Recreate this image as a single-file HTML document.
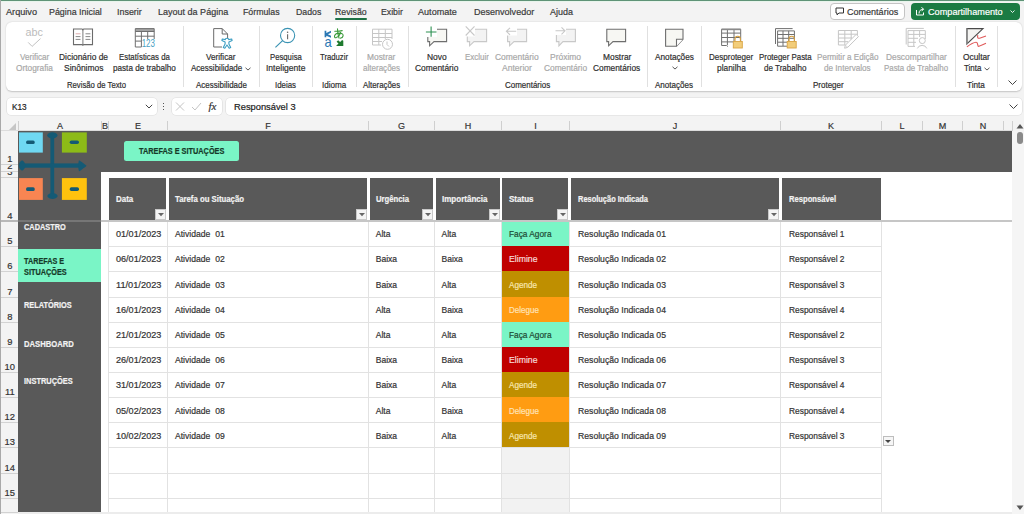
<!DOCTYPE html>
<html><head><meta charset="utf-8"><style>
html,body{margin:0;padding:0;width:1024px;height:514px;overflow:hidden;background:#f3f3f3}
body{position:relative;font-family:"Liberation Sans", sans-serif}
.t{position:absolute;white-space:nowrap;line-height:1;transform-origin:0 0;-webkit-text-stroke-width:0.2px}
.r{position:absolute}
</style></head><body>
<div class="r" style="left:0px;top:0px;width:1024px;height:514px;background:#f3f3f3;"></div><div class="r" style="left:0px;top:0px;width:1024px;height:1px;background:#5f9377;"></div><div class="r" style="left:1px;top:1px;width:1023px;height:1px;background:#e8f5ec;"></div><div class="r" style="left:0px;top:0px;width:1px;height:514px;background:#a9a9a9;"></div><div class="t" style="transform:scaleX(0.9765);left:6.15px;top:7.00px;font-size:9.4px;color:#3a3a3a;font-weight:normal">Arquivo</div><div class="t" style="transform:scaleX(0.9468);left:48.80px;top:7.00px;font-size:9.4px;color:#3a3a3a;font-weight:normal">Página Inicial</div><div class="t" style="transform:scaleX(0.9521);left:116.80px;top:7.00px;font-size:9.4px;color:#3a3a3a;font-weight:normal">Inserir</div><div class="t" style="transform:scaleX(0.9618);left:157.80px;top:7.00px;font-size:9.4px;color:#3a3a3a;font-weight:normal">Layout da Página</div><div class="t" style="transform:scaleX(0.9366);left:243.40px;top:7.00px;font-size:9.4px;color:#3a3a3a;font-weight:normal">Fórmulas</div><div class="t" style="transform:scaleX(0.9333);left:295.70px;top:7.00px;font-size:9.4px;color:#3a3a3a;font-weight:normal">Dados</div><div class="t" style="transform:scaleX(0.9358);left:335.30px;top:7.00px;font-size:9.4px;color:#3a3a3a;font-weight:normal">Revisão</div><div class="t" style="transform:scaleX(0.9295);left:380.80px;top:7.00px;font-size:9.4px;color:#3a3a3a;font-weight:normal">Exibir</div><div class="t" style="transform:scaleX(0.9691);left:418.30px;top:7.00px;font-size:9.4px;color:#3a3a3a;font-weight:normal">Automate</div><div class="t" style="transform:scaleX(0.9625);left:473.80px;top:7.00px;font-size:9.4px;color:#3a3a3a;font-weight:normal">Desenvolvedor</div><div class="t" style="transform:scaleX(0.9548);left:549.80px;top:7.00px;font-size:9.4px;color:#3a3a3a;font-weight:normal">Ajuda</div><div class="r" style="left:335px;top:18.3px;width:32px;height:1.8px;background:#1e7145;border-radius:1px"></div><div class="r" style="left:829.5px;top:3px;width:75px;height:16.5px;background:#fff;border:1px solid #c4c4c4;border-radius:4px;box-sizing:border-box"></div><svg class="r" style="left:835px;top:7px" width="10" height="9" viewBox="0 0 10 9"><path d="M1 1h7.5v5h-4.5l-2 1.8v-1.8h-1z" fill="none" stroke="#333" stroke-width="1"/></svg><div class="t" style="transform:scaleX(0.9632);left:846.90px;top:7.00px;font-size:9.4px;color:#3a3a3a;font-weight:normal">Comentários</div><div class="r" style="left:910.5px;top:3px;width:109px;height:16.5px;background:#1b7b43;border-radius:4px"></div><svg class="r" style="left:915px;top:6px" width="10" height="10" viewBox="0 0 10 10"><path d="M1.5 4v5h7V6.5" fill="none" stroke="#fff" stroke-width="1"/><path d="M4 7.5c0-3 2-4.3 4.5-4.3M6.5 1.2l2 2-2 2" fill="none" stroke="#fff" stroke-width="1"/></svg><div class="t" style="transform:scaleX(0.9751);left:927.60px;top:7.00px;font-size:9.4px;color:#ffffff;font-weight:normal">Compartilhamento</div><svg class="r" style="left:1010px;top:10px" width="5" height="3" viewBox="0 0 5 3"><path d="M0.5 0.5l2 2 2-2" fill="none" stroke="#fff" stroke-width="0.9"/></svg><div class="r" style="left:6px;top:21.5px;width:1015.5px;height:69.5px;background:#fff;border-radius:6px;box-shadow:0 0.6px 1.6px rgba(0,0,0,0.2)"></div><div class="r" style="left:183px;top:25.5px;width:1px;height:61.5px;background:#e0e0e0;"></div><div class="r" style="left:259px;top:25.5px;width:1px;height:61.5px;background:#e0e0e0;"></div><div class="r" style="left:312px;top:25.5px;width:1px;height:61.5px;background:#e0e0e0;"></div><div class="r" style="left:356px;top:25.5px;width:1px;height:61.5px;background:#e0e0e0;"></div><div class="r" style="left:408px;top:25.5px;width:1px;height:61.5px;background:#e0e0e0;"></div><div class="r" style="left:647px;top:25.5px;width:1px;height:61.5px;background:#e0e0e0;"></div><div class="r" style="left:701px;top:25.5px;width:1px;height:61.5px;background:#e0e0e0;"></div><div class="r" style="left:955px;top:25.5px;width:1px;height:61.5px;background:#e0e0e0;"></div><div class="r" style="left:997px;top:25.5px;width:1px;height:61.5px;background:#e0e0e0;"></div><div class="t" style="transform:scaleX(0.8722);left:20.10px;top:53.00px;font-size:9.3px;color:#a8a8a8;font-weight:normal">Verificar</div><div class="t" style="transform:scaleX(0.8925);left:16.30px;top:64.00px;font-size:9.3px;color:#a8a8a8;font-weight:normal">Ortografia</div><div class="t" style="transform:scaleX(0.9030);left:58.80px;top:53.00px;font-size:9.3px;color:#2e2e2e;font-weight:normal">Dicionário de</div><div class="t" style="transform:scaleX(0.9074);left:63.60px;top:64.00px;font-size:9.3px;color:#2e2e2e;font-weight:normal">Sinônimos</div><div class="t" style="transform:scaleX(0.8418);left:119.00px;top:53.00px;font-size:9.3px;color:#2e2e2e;font-weight:normal">Estatísticas da</div><div class="t" style="transform:scaleX(0.8753);left:113.00px;top:64.00px;font-size:9.3px;color:#2e2e2e;font-weight:normal">pasta de trabalho</div><div class="t" style="transform:scaleX(0.8292);left:66.50px;top:81.00px;font-size:9.3px;color:#2e2e2e;font-weight:normal">Revisão de Texto</div><div class="t" style="transform:scaleX(0.8781);left:206.20px;top:53.00px;font-size:9.3px;color:#2e2e2e;font-weight:normal">Verificar</div><div class="t" style="transform:scaleX(0.8631);left:191.20px;top:64.00px;font-size:9.3px;color:#2e2e2e;font-weight:normal">Acessibilidade</div><div class="t" style="transform:scaleX(0.8564);left:195.70px;top:81.00px;font-size:9.3px;color:#2e2e2e;font-weight:normal">Acessibilidade</div><div class="t" style="transform:scaleX(0.8314);left:269.50px;top:53.00px;font-size:9.3px;color:#2e2e2e;font-weight:normal">Pesquisa</div><div class="t" style="transform:scaleX(0.9183);left:265.60px;top:64.00px;font-size:9.3px;color:#2e2e2e;font-weight:normal">Inteligente</div><div class="t" style="transform:scaleX(0.8463);left:274.60px;top:81.00px;font-size:9.3px;color:#2e2e2e;font-weight:normal">Ideias</div><div class="t" style="transform:scaleX(0.8292);left:320.20px;top:53.00px;font-size:9.3px;color:#2e2e2e;font-weight:normal">Traduzir</div><div class="t" style="transform:scaleX(0.8708);left:321.70px;top:81.00px;font-size:9.3px;color:#2e2e2e;font-weight:normal">Idioma</div><div class="t" style="transform:scaleX(0.9011);left:367.40px;top:53.00px;font-size:9.3px;color:#a8a8a8;font-weight:normal">Mostrar</div><div class="t" style="transform:scaleX(0.8647);left:362.90px;top:64.00px;font-size:9.3px;color:#a8a8a8;font-weight:normal">alterações</div><div class="t" style="transform:scaleX(0.8444);left:362.90px;top:81.00px;font-size:9.3px;color:#2e2e2e;font-weight:normal">Alterações</div><div class="t" style="transform:scaleX(0.9071);left:427.00px;top:53.00px;font-size:9.3px;color:#2e2e2e;font-weight:normal">Novo</div><div class="t" style="transform:scaleX(0.9030);left:415.00px;top:64.00px;font-size:9.3px;color:#2e2e2e;font-weight:normal">Comentário</div><div class="t" style="transform:scaleX(0.8564);left:464.70px;top:53.00px;font-size:9.3px;color:#a8a8a8;font-weight:normal">Excluir</div><div class="t" style="transform:scaleX(0.9092);left:494.50px;top:53.00px;font-size:9.3px;color:#a8a8a8;font-weight:normal">Comentário</div><div class="t" style="transform:scaleX(0.9182);left:501.70px;top:64.00px;font-size:9.3px;color:#a8a8a8;font-weight:normal">Anterior</div><div class="t" style="transform:scaleX(0.9118);left:549.90px;top:53.00px;font-size:9.3px;color:#a8a8a8;font-weight:normal">Próximo</div><div class="t" style="transform:scaleX(0.8967);left:543.90px;top:64.00px;font-size:9.3px;color:#a8a8a8;font-weight:normal">Comentário</div><div class="t" style="transform:scaleX(0.9011);left:602.50px;top:53.00px;font-size:9.3px;color:#2e2e2e;font-weight:normal">Mostrar</div><div class="t" style="transform:scaleX(0.8953);left:592.70px;top:64.00px;font-size:9.3px;color:#2e2e2e;font-weight:normal">Comentários</div><div class="t" style="transform:scaleX(0.8574);left:505.00px;top:81.00px;font-size:9.3px;color:#2e2e2e;font-weight:normal">Comentários</div><div class="t" style="transform:scaleX(0.8853);left:654.90px;top:53.00px;font-size:9.3px;color:#2e2e2e;font-weight:normal">Anotações</div><div class="t" style="transform:scaleX(0.8649);left:655.00px;top:81.00px;font-size:9.3px;color:#2e2e2e;font-weight:normal">Anotações</div><div class="t" style="transform:scaleX(0.8638);left:708.70px;top:53.00px;font-size:9.3px;color:#2e2e2e;font-weight:normal">Desproteger</div><div class="t" style="transform:scaleX(0.8982);left:716.60px;top:64.00px;font-size:9.3px;color:#2e2e2e;font-weight:normal">planilha</div><div class="t" style="transform:scaleX(0.8498);left:758.60px;top:53.00px;font-size:9.3px;color:#2e2e2e;font-weight:normal">Proteger Pasta</div><div class="t" style="transform:scaleX(0.8654);left:764.00px;top:64.00px;font-size:9.3px;color:#2e2e2e;font-weight:normal">de Trabalho</div><div class="t" style="transform:scaleX(0.8701);left:816.50px;top:53.00px;font-size:9.3px;color:#a8a8a8;font-weight:normal">Permitir a Edição</div><div class="t" style="transform:scaleX(0.8773);left:824.00px;top:64.00px;font-size:9.3px;color:#a8a8a8;font-weight:normal">de Intervalos</div><div class="t" style="transform:scaleX(0.8606);left:812.70px;top:81.00px;font-size:9.3px;color:#2e2e2e;font-weight:normal">Proteger</div><div class="t" style="transform:scaleX(0.8997);left:885.50px;top:53.00px;font-size:9.3px;color:#a8a8a8;font-weight:normal">Descompartilhar</div><div class="t" style="transform:scaleX(0.8494);left:883.50px;top:64.00px;font-size:9.3px;color:#a8a8a8;font-weight:normal">Pasta de Trabalho</div><div class="t" style="transform:scaleX(0.8976);left:962.90px;top:53.00px;font-size:9.3px;color:#2e2e2e;font-weight:normal">Ocultar</div><div class="t" style="transform:scaleX(0.8560);left:963.60px;top:64.00px;font-size:9.3px;color:#2e2e2e;font-weight:normal">Tinta</div><div class="t" style="transform:scaleX(0.8806);left:967.40px;top:81.00px;font-size:9.3px;color:#2e2e2e;font-weight:normal">Tinta</div><svg class="r" style="left:244.5px;top:67.2px" width="6" height="4" viewBox="0 0 6 4"><path d="M0.5 0.8l2.5 2.25l2.5 -2.25" fill="none" stroke="#444" stroke-width="0.9"/></svg><svg class="r" style="left:671.5px;top:66px" width="6" height="4" viewBox="0 0 6 4"><path d="M0.5 0.8l2.5 2.25l2.5 -2.25" fill="none" stroke="#444" stroke-width="0.9"/></svg><svg class="r" style="left:983.5px;top:67.2px" width="6" height="4" viewBox="0 0 6 4"><path d="M0.5 0.8l2.5 2.25l2.5 -2.25" fill="none" stroke="#444" stroke-width="0.9"/></svg><svg class="r" style="left:1008px;top:80px" width="9" height="5" viewBox="0 0 9 5"><path d="M0.5 0.5l4 4 4-4" fill="none" stroke="#444" stroke-width="1"/></svg><svg class="r" style="left:0px;top:0px" width="1024" height="60" viewBox="0 0 1024 60" font-family="Liberation Sans, sans-serif">
<!-- abc check (disabled) -->
<text x="25.6" y="36.4" font-size="11.2" fill="#bcbcbc" textLength="17.4" lengthAdjust="spacingAndGlyphs">abc</text>
<path d="M28.2 42.4L32.1 46.4L40.5 38.6" fill="none" stroke="#c2c2c2" stroke-width="1"/>
<!-- book -->
<g fill="none" stroke="#6b6b6b" stroke-width="1.1">
<path d="M73.5 29h8.6l0.8 0.9l0.8-0.9h8.8v15.6h-8.8l-0.8 0.7l-0.8-0.7h-8.6z" fill="#fff"/>
<path d="M82.9 30v14.6" stroke-width="0.9"/>
</g>
<g stroke-width="0.9">
<path d="M75.6 33.8h4.9" stroke="#d8a3a3"/><path d="M75.6 36.6h4.9M75.6 39.4h4.9" stroke="#7a7a7a"/>
<path d="M85.5 33.8h4.9M85.5 36.6h4.9M85.5 39.4h4.9" stroke="#7a7a7a"/>
</g>
<!-- table 123 -->
<rect x="135.3" y="28.8" width="18.9" height="2.6" fill="#a3a3a3"/>
<g fill="none" stroke="#6e6e6e" stroke-width="1">
<path d="M135.3 47V28.6H154.2V39"/>
<path d="M135.3 31.5H154.2M135.3 36.2H154.2M135.3 41.1H141.4M141.4 31.5V47M147.7 31.5V39M135.3 47H141.4"/>
</g>
<text x="141.7" y="47.4" font-size="10.6" fill="#4a9fc3" textLength="13.3" lengthAdjust="spacingAndGlyphs">123</text>
<!-- accessibility doc -->
<path d="M213.7 28.6h8.5l5.4 5.4v8M222 47h-8.3v-18.4" fill="#fff" stroke="#6b6b6b" stroke-width="1"/>
<path d="M222.2 28.6v5.4h5.4" fill="none" stroke="#6b6b6b" stroke-width="1"/>
<g fill="#fff" stroke="#3a9dc2" stroke-width="1.1" stroke-linejoin="round">
<path d="M227 38.2c1 0 1.7 0.6 1.7 1.4l3-0.6l0.4 1.6l-3.2 1.4v2.1l1.8 3.4l-1.5 0.7l-2.2-3.2l-2.2 3.2l-1.5-0.7l1.8-3.4v-2.1l-3.2-1.4l0.4-1.6l3 0.6c0-0.8 0.7-1.4 1.7-1.4z"/>
</g>
<!-- magnifier -->
<circle cx="287.6" cy="35.5" r="7.1" fill="none" stroke="#3a93b3" stroke-width="1.1"/>
<path d="M275.4 47.4L282.6 40.6" stroke="#3a93b3" stroke-width="1.2"/>
<circle cx="287.6" cy="32.3" r="0.8" fill="#666"/>
<path d="M287.6 34.3v5" stroke="#666" stroke-width="1.1"/>
<!-- translate -->
<text x="324.4" y="46.7" font-size="14.5" fill="#2b78b4" textLength="7.2" lengthAdjust="spacingAndGlyphs">a</text>
<path d="M324.6 30.8h1.7v2.1l4.7-2.1v2l-3.1 1.5l3.1 1.5v2l-4.7-2.1v1.6h-1.7z" fill="#2b78b4"/>
<g fill="none" stroke="#3a9a3a" stroke-width="1.1" stroke-linecap="round">
<path d="M334.8 31.2Q338.5 31.5 342.2 30.6"/>
<path d="M337.5 28.9Q337.6 33.5 339 38"/>
<path d="M340.6 32.6Q339.3 36.6 336.2 37.6Q334.1 38.1 334.6 35.7Q335.5 33.2 339.4 33.1Q343.4 33.2 343.1 35.8Q342.8 37.9 340.2 38.3"/>
</g>
<path d="M343.3 40.8V45.9H336L338.5 43.6L336.6 41.8L338.2 40.2L340.1 42L342.1 40.1Z" fill="#1e7a2e"/>
<!-- mostrar alteracoes -->
<g fill="none" stroke="#c6c6c6" stroke-width="1">
<path d="M372.5 45V29.2H392V39M372.5 33.5H392M372.5 37.5H392M372.5 41.5H382M372.5 45H381M378.8 29.2V45M385.3 29.2V39"/>
<circle cx="387.5" cy="44.3" r="5" fill="#fff"/>
<path d="M387 41.5v3l2 2"/>
</g>
<!-- bubbles -->
<g stroke-width="1.1">
<path d="M427.8 29.2H446.6V41.6H434L429.6 45.8V41.6H427.8Z" fill="#f7f7f3" stroke="#6e6e6e"/>
<rect x="425" y="26" width="12" height="11" fill="#fff" stroke="none"/><path d="M431.1 26.4V36.8M425.9 32H436.5" stroke="#2f9152" stroke-width="1.1"/>
<path d="M467.3 29.2H486.6V41.6H474L469.6 45.8V41.6H467.3Z" fill="#f3f3f3" stroke="#c8c8c8"/>
<rect x="465" y="26" width="10" height="10.5" fill="#fff" stroke="none"/><path d="M465.7 26.3L474.5 35.5M474.5 26.3L465.7 35.5" stroke="#c8c8c8"/>
<path d="M507.6 29.2H526.6V41.6H514L509.6 45.8V41.6H507.6Z" fill="#f3f3f3" stroke="#c8c8c8"/>
<rect x="505.5" y="27" width="11.5" height="8.5" fill="#fff" stroke="none"/><path d="M506.4 31.3H516.2M510 27.8L506.4 31.3L510 34.8" fill="none" stroke="#c8c8c8"/>
<path d="M556.4 29.2H575.4V41.6H563L558.9 45.8V41.6H556.4Z" fill="#f3f3f3" stroke="#c8c8c8"/>
<rect x="555" y="26.5" width="11" height="8.5" fill="#fff" stroke="none"/><path d="M555.5 30.8H565M561.5 27.3L565 30.8L561.5 34.3" fill="none" stroke="#c8c8c8"/>
<path d="M606.8 29.2H625.6V41.6H613L608.6 45.8V41.6H606.8Z" fill="#f7f7f3" stroke="#6e6e6e"/>
</g>
<!-- anotacoes -->
<path d="M665.6 29.2H683V39.3L676.5 46.2H665.6Z" fill="#f7f7f3" stroke="#6e6e6e" stroke-width="1.1"/>
<path d="M683 39.3H676.5V46.2" fill="#fff" stroke="#6e6e6e" stroke-width="1.1"/>
<!-- desproteger -->
<g fill="none" stroke="#707070" stroke-width="1">
<path d="M721.6 45.5V29.2H740.7V41M721.6 33.1H740.7M721.6 37.5H740.7M721.6 41.9H733M727.4 29.2V45M734 29.2V41M721.6 45.5H726.5l1.5 1"/>
</g>
<rect x="721.6" y="28.7" width="19.1" height="1.5" fill="#8a8a8a"/>
<path d="M735 41.5V39a2.7 2.7 0 0 1 5.4 0v2.5" fill="none" stroke="#d6a040" stroke-width="1.1"/>
<rect x="733.3" y="41.5" width="9" height="6.5" fill="#f2cd7a" stroke="#d9a443" stroke-width="0.9"/>
<!-- proteger pasta -->
<g fill="none" stroke="#707070" stroke-width="1">
<path d="M775.5 44V28.6H792.6"/>
<path d="M777.6 46.2V30.9H794.4V41M777.6 34.5H794.4M777.6 38.3H794.4M777.6 42.2H787M783 30.9V46M788.7 30.9V41M777.6 46.2H787"/>
</g>
<path d="M789 41.5V39a2.7 2.7 0 0 1 5.4 0v2.5" fill="none" stroke="#d6a040" stroke-width="1.1"/>
<rect x="787.2" y="41.5" width="9" height="6.5" fill="#f2cd7a" stroke="#d9a443" stroke-width="0.9"/>
<!-- permitir -->
<g fill="none" stroke="#c6c6c6" stroke-width="1">
<path d="M838.4 45V30.5H857.4V35M838.4 34.2H857.4M838.4 38H852M838.4 41.7H848M838.4 45H845M844.8 30.5V45M851.2 30.5V40"/>
<path d="M856.17 34.37L858.43 36.63L847.63 47.43L844.6 48.2L845.37 45.17Z" fill="#fff" stroke-linejoin="round"/><path d="M846 45.6L847.2 46.8" />
</g>
<!-- descompartilhar -->
<g fill="none" stroke="#c6c6c6" stroke-width="1">
<path d="M906.2 44.5V28.4H923.8"/>
<path d="M908 46.4V30.6H925.3V39M908 34.4H925.3M908 38.3H918M908 42.3H916M908 46.4H915M913.8 30.6V46.4M919.6 30.6V37"/>
<circle cx="922.3" cy="40.6" r="3" fill="#fff"/>
<path d="M917.4 48.4a4.9 4.2 0 0 1 9.4 0" fill="#fff"/>
</g>
<!-- ocultar tinta -->
<path d="M966.9 28.6H983L966.9 44Z" fill="#f4f4f2" stroke="#4a4a4a" stroke-width="1.1"/>
<path d="M966.9 28.6V44" stroke="#8a8a8a" stroke-width="1.6"/>
<path d="M977.8 35.2C977.2 37.5 977.8 38.6 979.6 38.2L986 36" fill="none" stroke="#e05a5a" stroke-width="1.15"/>
<path d="M966.9 46.9C969.5 45 973.5 42.5 976 42.3C978.6 42.1 977 46.3 978.6 46.3C980 46.3 983.5 44.3 986 43.3" fill="none" stroke="#e05a5a" stroke-width="1.15"/>
</svg>
<div class="r" style="left:7px;top:98px;width:149.5px;height:16.5px;background:#fff;border-radius:4px;box-shadow:0 0 0 0.6px #dcdcdc"></div><div class="t" style="transform:scaleX(0.9179);left:11.90px;top:103.00px;font-size:9px;color:#222;font-weight:normal">K13</div><svg class="r" style="left:145px;top:104px" width="8" height="5" viewBox="0 0 8 5"><path d="M0.8 0.8l3.2 3.2 3.2-3.2" fill="none" stroke="#444" stroke-width="1"/></svg><div class="r" style="left:162.5px;top:102.5px;width:1.3px;height:1.3px;background:#555;"></div><div class="r" style="left:162.5px;top:105.7px;width:1.3px;height:1.3px;background:#555;"></div><div class="r" style="left:162.5px;top:108.9px;width:1.3px;height:1.3px;background:#555;"></div><div class="r" style="left:171.5px;top:98px;width:50.5px;height:16.5px;background:#fff;border-radius:4px;box-shadow:0 0 0 0.6px #dcdcdc"></div><svg class="r" style="left:175px;top:101px" width="48" height="11" viewBox="0 0 48 11"><path d="M1 1.5l8 8M9 1.5l-8 8" stroke="#c4c4c4" stroke-width="1" fill="none"/><path d="M17 6l3 3 6-7" stroke="#c4c4c4" stroke-width="1" fill="none"/></svg><div class="t" style="left:208.5px;top:100.5px;font-size:11px;font-family:'Liberation Serif',serif;font-style:italic;color:#333">fx</div><div class="r" style="left:225.5px;top:98px;width:796px;height:16.5px;background:#fff;border-radius:4px;box-shadow:0 0 0 0.6px #dcdcdc"></div><div class="t" style="transform:scaleX(1.0345);left:233.70px;top:103.00px;font-size:9px;color:#222;font-weight:normal">Responsável 3</div><svg class="r" style="left:1009px;top:104px" width="9" height="5" viewBox="0 0 9 5"><path d="M0.5 0.5l4 4 4-4" fill="none" stroke="#444" stroke-width="1"/></svg><div class="r" style="left:18px;top:120px;width:994px;height:11px;background:#f3f3f3;"></div><svg class="r" style="left:8px;top:122px" width="9" height="9" viewBox="0 0 9 9"><path d="M8 1v7h-7z" fill="#c6c6c6"/></svg><div class="r" style="left:101px;top:120.5px;width:1px;height:11px;background:#cfcfcf;"></div><div class="t" style="left:-40.0px;width:200px;text-align:center;top:122.00px;font-size:9px;color:#333;font-weight:normal">A</div><div class="r" style="left:108px;top:120.5px;width:1px;height:11px;background:#cfcfcf;"></div><div class="t" style="left:5.0px;width:200px;text-align:center;top:122.00px;font-size:9px;color:#333;font-weight:normal">B</div><div class="r" style="left:167px;top:120.5px;width:1px;height:11px;background:#cfcfcf;"></div><div class="t" style="left:38.0px;width:200px;text-align:center;top:122.00px;font-size:9px;color:#333;font-weight:normal">E</div><div class="r" style="left:368px;top:120.5px;width:1px;height:11px;background:#cfcfcf;"></div><div class="t" style="left:168.0px;width:200px;text-align:center;top:122.00px;font-size:9px;color:#333;font-weight:normal">F</div><div class="r" style="left:434px;top:120.5px;width:1px;height:11px;background:#cfcfcf;"></div><div class="t" style="left:301.5px;width:200px;text-align:center;top:122.00px;font-size:9px;color:#333;font-weight:normal">G</div><div class="r" style="left:501px;top:120.5px;width:1px;height:11px;background:#cfcfcf;"></div><div class="t" style="left:368.0px;width:200px;text-align:center;top:122.00px;font-size:9px;color:#333;font-weight:normal">H</div><div class="r" style="left:569px;top:120.5px;width:1px;height:11px;background:#cfcfcf;"></div><div class="t" style="left:435.5px;width:200px;text-align:center;top:122.00px;font-size:9px;color:#333;font-weight:normal">I</div><div class="r" style="left:780px;top:120.5px;width:1px;height:11px;background:#cfcfcf;"></div><div class="t" style="left:575.0px;width:200px;text-align:center;top:122.00px;font-size:9px;color:#333;font-weight:normal">J</div><div class="r" style="left:881px;top:120.5px;width:1px;height:11px;background:#cfcfcf;"></div><div class="t" style="left:731.0px;width:200px;text-align:center;top:122.00px;font-size:9px;color:#333;font-weight:normal">K</div><div class="r" style="left:922px;top:120.5px;width:1px;height:11px;background:#cfcfcf;"></div><div class="t" style="left:802.0px;width:200px;text-align:center;top:122.00px;font-size:9px;color:#333;font-weight:normal">L</div><div class="r" style="left:962px;top:120.5px;width:1px;height:11px;background:#cfcfcf;"></div><div class="t" style="left:842.5px;width:200px;text-align:center;top:122.00px;font-size:9px;color:#333;font-weight:normal">M</div><div class="r" style="left:1003px;top:120.5px;width:1px;height:11px;background:#cfcfcf;"></div><div class="t" style="left:883.0px;width:200px;text-align:center;top:122.00px;font-size:9px;color:#333;font-weight:normal">N</div><div class="r" style="left:1012px;top:120.5px;width:1px;height:11px;background:#cfcfcf;"></div><div class="r" style="left:18px;top:120.5px;width:1px;height:11px;background:#cfcfcf;"></div><div class="r" style="left:1px;top:130px;width:1011px;height:1px;background:#dcdcdc;"></div><div class="r" style="left:1px;top:131px;width:17px;height:383px;background:#f3f3f3;"></div><div class="r" style="left:1px;top:164px;width:17.5px;height:1px;background:#d2d2d2;"></div><div class="r" style="left:1px;top:132px;width:17.5px;height:32px;overflow:hidden"><div class="t" style="left:0;width:17.5px;text-align:center;top:22px;font-size:9.4px;color:#333">1</div></div><div class="r" style="left:1px;top:171px;width:17.5px;height:1px;background:#d2d2d2;"></div><div class="r" style="left:1px;top:165px;width:17.5px;height:6px;overflow:hidden"><div class="t" style="left:0;width:17.5px;text-align:center;top:-4px;font-size:9.4px;color:#333">2</div></div><div class="r" style="left:1px;top:177px;width:17.5px;height:1px;background:#d2d2d2;"></div><div class="r" style="left:1px;top:172px;width:17.5px;height:5px;overflow:hidden"><div class="t" style="left:0;width:17.5px;text-align:center;top:-5px;font-size:9.4px;color:#333">3</div></div><div class="r" style="left:1px;top:221px;width:17.5px;height:1px;background:#d2d2d2;"></div><div class="r" style="left:1px;top:178px;width:17.5px;height:43px;overflow:hidden"><div class="t" style="left:0;width:17.5px;text-align:center;top:33px;font-size:9.4px;color:#333">4</div></div><div class="r" style="left:1px;top:246px;width:17.5px;height:1px;background:#d2d2d2;"></div><div class="r" style="left:1px;top:222px;width:17.5px;height:24px;overflow:hidden"><div class="t" style="left:0;width:17.5px;text-align:center;top:14px;font-size:9.4px;color:#333">5</div></div><div class="r" style="left:1px;top:271px;width:17.5px;height:1px;background:#d2d2d2;"></div><div class="r" style="left:1px;top:247px;width:17.5px;height:24px;overflow:hidden"><div class="t" style="left:0;width:17.5px;text-align:center;top:14px;font-size:9.4px;color:#333">6</div></div><div class="r" style="left:1px;top:297px;width:17.5px;height:1px;background:#d2d2d2;"></div><div class="r" style="left:1px;top:272px;width:17.5px;height:25px;overflow:hidden"><div class="t" style="left:0;width:17.5px;text-align:center;top:15px;font-size:9.4px;color:#333">7</div></div><div class="r" style="left:1px;top:322px;width:17.5px;height:1px;background:#d2d2d2;"></div><div class="r" style="left:1px;top:298px;width:17.5px;height:24px;overflow:hidden"><div class="t" style="left:0;width:17.5px;text-align:center;top:14px;font-size:9.4px;color:#333">8</div></div><div class="r" style="left:1px;top:347px;width:17.5px;height:1px;background:#d2d2d2;"></div><div class="r" style="left:1px;top:323px;width:17.5px;height:24px;overflow:hidden"><div class="t" style="left:0;width:17.5px;text-align:center;top:14px;font-size:9.4px;color:#333">9</div></div><div class="r" style="left:1px;top:372px;width:17.5px;height:1px;background:#d2d2d2;"></div><div class="r" style="left:1px;top:348px;width:17.5px;height:24px;overflow:hidden"><div class="t" style="left:0;width:17.5px;text-align:center;top:14px;font-size:9.4px;color:#333">10</div></div><div class="r" style="left:1px;top:397px;width:17.5px;height:1px;background:#d2d2d2;"></div><div class="r" style="left:1px;top:373px;width:17.5px;height:24px;overflow:hidden"><div class="t" style="left:0;width:17.5px;text-align:center;top:14px;font-size:9.4px;color:#333">11</div></div><div class="r" style="left:1px;top:422px;width:17.5px;height:1px;background:#d2d2d2;"></div><div class="r" style="left:1px;top:398px;width:17.5px;height:24px;overflow:hidden"><div class="t" style="left:0;width:17.5px;text-align:center;top:14px;font-size:9.4px;color:#333">12</div></div><div class="r" style="left:1px;top:447px;width:17.5px;height:1px;background:#d2d2d2;"></div><div class="r" style="left:1px;top:423px;width:17.5px;height:24px;overflow:hidden"><div class="t" style="left:0;width:17.5px;text-align:center;top:14px;font-size:9.4px;color:#333">13</div></div><div class="r" style="left:1px;top:473px;width:17.5px;height:1px;background:#d2d2d2;"></div><div class="r" style="left:1px;top:448px;width:17.5px;height:25px;overflow:hidden"><div class="t" style="left:0;width:17.5px;text-align:center;top:15px;font-size:9.4px;color:#333">14</div></div><div class="r" style="left:1px;top:498px;width:17.5px;height:1px;background:#d2d2d2;"></div><div class="r" style="left:1px;top:474px;width:17.5px;height:24px;overflow:hidden"><div class="t" style="left:0;width:17.5px;text-align:center;top:14px;font-size:9.4px;color:#333">15</div></div><div class="r" style="left:1px;top:512px;width:17.5px;height:1px;background:#d2d2d2;"></div><div class="r" style="left:18px;top:131px;width:994px;height:381px;background:#ffffff;"></div><div class="r" style="left:18px;top:131px;width:994px;height:41px;background:#595959;"></div><div class="r" style="left:18px;top:131px;width:83px;height:381px;background:#595959;"></div><div class="r" style="left:108px;top:222px;width:1px;height:290px;background:#e2e2e2;"></div><div class="r" style="left:167px;top:222px;width:1px;height:290px;background:#e2e2e2;"></div><div class="r" style="left:368px;top:222px;width:1px;height:290px;background:#e2e2e2;"></div><div class="r" style="left:434px;top:222px;width:1px;height:290px;background:#e2e2e2;"></div><div class="r" style="left:501px;top:222px;width:1px;height:290px;background:#e2e2e2;"></div><div class="r" style="left:569px;top:222px;width:1px;height:290px;background:#e2e2e2;"></div><div class="r" style="left:780px;top:222px;width:1px;height:290px;background:#e2e2e2;"></div><div class="r" style="left:881px;top:222px;width:1px;height:290px;background:#e2e2e2;"></div><div class="r" style="left:108px;top:246px;width:773px;height:1px;background:#e2e2e2;"></div><div class="r" style="left:108px;top:271px;width:773px;height:1px;background:#e2e2e2;"></div><div class="r" style="left:108px;top:297px;width:773px;height:1px;background:#e2e2e2;"></div><div class="r" style="left:108px;top:322px;width:773px;height:1px;background:#e2e2e2;"></div><div class="r" style="left:108px;top:347px;width:773px;height:1px;background:#e2e2e2;"></div><div class="r" style="left:108px;top:372px;width:773px;height:1px;background:#e2e2e2;"></div><div class="r" style="left:108px;top:397px;width:773px;height:1px;background:#e2e2e2;"></div><div class="r" style="left:108px;top:422px;width:773px;height:1px;background:#e2e2e2;"></div><div class="r" style="left:108px;top:447px;width:773px;height:1px;background:#e2e2e2;"></div><div class="r" style="left:108px;top:473px;width:773px;height:1px;background:#e2e2e2;"></div><div class="r" style="left:108px;top:498px;width:773px;height:1px;background:#e2e2e2;"></div><div class="r" style="left:109px;top:178px;width:57px;height:42px;background:#595959;"></div><div class="t" style="transform:scaleX(0.9473);left:115.80px;top:195.00px;font-size:8.4px;color:#f2f2f2;font-weight:bold">Data</div><div class="r" style="left:155.2px;top:209px;width:10.8px;height:10.8px;background:#f4f4f4;border:0.6px solid #c9c9c9;box-sizing:border-box"></div><svg class="r" style="left:157.7px;top:213px" width="6" height="4" viewBox="0 0 6 4"><path d="M0 0h6l-3 3.2z" fill="#666"/></svg><div class="r" style="left:169px;top:178px;width:198px;height:42px;background:#595959;"></div><div class="t" style="transform:scaleX(0.9285);left:175.00px;top:195.00px;font-size:8.4px;color:#f2f2f2;font-weight:bold">Tarefa ou Situação</div><div class="r" style="left:356.2px;top:209px;width:10.8px;height:10.8px;background:#f4f4f4;border:0.6px solid #c9c9c9;box-sizing:border-box"></div><svg class="r" style="left:358.7px;top:213px" width="6" height="4" viewBox="0 0 6 4"><path d="M0 0h6l-3 3.2z" fill="#666"/></svg><div class="r" style="left:370px;top:178px;width:63px;height:42px;background:#595959;"></div><div class="t" style="transform:scaleX(0.9207);left:375.50px;top:195.00px;font-size:8.4px;color:#f2f2f2;font-weight:bold">Urgência</div><div class="r" style="left:422.2px;top:209px;width:10.8px;height:10.8px;background:#f4f4f4;border:0.6px solid #c9c9c9;box-sizing:border-box"></div><svg class="r" style="left:424.7px;top:213px" width="6" height="4" viewBox="0 0 6 4"><path d="M0 0h6l-3 3.2z" fill="#666"/></svg><div class="r" style="left:436px;top:178px;width:64px;height:42px;background:#595959;"></div><div class="t" style="transform:scaleX(0.9582);left:441.50px;top:195.00px;font-size:8.4px;color:#f2f2f2;font-weight:bold">Importância</div><div class="r" style="left:489.2px;top:209px;width:10.8px;height:10.8px;background:#f4f4f4;border:0.6px solid #c9c9c9;box-sizing:border-box"></div><svg class="r" style="left:491.7px;top:213px" width="6" height="4" viewBox="0 0 6 4"><path d="M0 0h6l-3 3.2z" fill="#666"/></svg><div class="r" style="left:502px;top:178px;width:66px;height:42px;background:#595959;"></div><div class="t" style="transform:scaleX(0.9567);left:508.50px;top:195.00px;font-size:8.4px;color:#f2f2f2;font-weight:bold">Status</div><div class="r" style="left:557.2px;top:209px;width:10.8px;height:10.8px;background:#f4f4f4;border:0.6px solid #c9c9c9;box-sizing:border-box"></div><svg class="r" style="left:559.7px;top:213px" width="6" height="4" viewBox="0 0 6 4"><path d="M0 0h6l-3 3.2z" fill="#666"/></svg><div class="r" style="left:571px;top:178px;width:208px;height:42px;background:#595959;"></div><div class="t" style="transform:scaleX(0.8899);left:577.50px;top:195.00px;font-size:8.4px;color:#f2f2f2;font-weight:bold">Resolução Indicada</div><div class="r" style="left:768.2px;top:209px;width:10.8px;height:10.8px;background:#f4f4f4;border:0.6px solid #c9c9c9;box-sizing:border-box"></div><svg class="r" style="left:770.7px;top:213px" width="6" height="4" viewBox="0 0 6 4"><path d="M0 0h6l-3 3.2z" fill="#666"/></svg><div class="r" style="left:782px;top:178px;width:99px;height:42px;background:#595959;"></div><div class="t" style="transform:scaleX(0.9096);left:788.50px;top:195.00px;font-size:8.4px;color:#f2f2f2;font-weight:bold">Responsável</div><div class="r" style="left:101px;top:220px;width:911px;height:2px;background:#c6c6c6;"></div><div class="r" style="left:1px;top:220px;width:17px;height:2px;background:#b8b8b8;"></div><div class="r" style="left:502px;top:222px;width:67px;height:25px;background:#7af5c6;"></div><div class="t" style="transform:scaleX(1.0078);left:115.70px;top:230.00px;font-size:9px;color:#333;font-weight:normal">01/01/2023</div><div class="t" style="transform:scaleX(0.9549);left:175.00px;top:230.00px;font-size:9px;color:#333;font-weight:normal">Atividade&nbsp; 01</div><div class="t" style="left:375.80px;top:230.00px;font-size:8.5px;color:#333;font-weight:normal">Alta</div><div class="t" style="left:441.50px;top:230.00px;font-size:8.5px;color:#333;font-weight:normal">Alta</div><div class="t" style="transform:scaleX(0.9233);left:508.50px;top:230.00px;font-size:9px;color:#1d4a33;font-weight:normal">Faça Agora</div><div class="t" style="transform:scaleX(0.9609);left:577.50px;top:230.00px;font-size:9px;color:#333;font-weight:normal">Resolução Indicada 01</div><div class="t" style="transform:scaleX(0.9320);left:788.50px;top:230.00px;font-size:9px;color:#333;font-weight:normal">Responsável 1</div><div class="r" style="left:502px;top:246px;width:67px;height:26px;background:#c00000;"></div><div class="t" style="transform:scaleX(1.0078);left:115.70px;top:255.00px;font-size:9px;color:#333;font-weight:normal">06/01/2023</div><div class="t" style="transform:scaleX(0.9549);left:175.00px;top:255.00px;font-size:9px;color:#333;font-weight:normal">Atividade&nbsp; 02</div><div class="t" style="left:375.80px;top:255.00px;font-size:8.5px;color:#333;font-weight:normal">Baixa</div><div class="t" style="left:441.50px;top:255.00px;font-size:8.5px;color:#333;font-weight:normal">Baixa</div><div class="t" style="transform:scaleX(0.9656);left:508.50px;top:255.00px;font-size:9px;color:#f7d9d9;font-weight:normal">Elimine</div><div class="t" style="transform:scaleX(0.9609);left:577.50px;top:255.00px;font-size:9px;color:#333;font-weight:normal">Resolução Indicada 02</div><div class="t" style="transform:scaleX(0.9320);left:788.50px;top:255.00px;font-size:9px;color:#333;font-weight:normal">Responsável 2</div><div class="r" style="left:502px;top:271px;width:67px;height:27px;background:#bf8f00;"></div><div class="t" style="transform:scaleX(1.0227);left:115.70px;top:281.00px;font-size:9px;color:#333;font-weight:normal">11/01/2023</div><div class="t" style="transform:scaleX(0.9549);left:175.00px;top:281.00px;font-size:9px;color:#333;font-weight:normal">Atividade&nbsp; 03</div><div class="t" style="left:375.80px;top:281.00px;font-size:8.5px;color:#333;font-weight:normal">Baixa</div><div class="t" style="left:441.50px;top:281.00px;font-size:8.5px;color:#333;font-weight:normal">Alta</div><div class="t" style="transform:scaleX(0.9023);left:508.50px;top:281.00px;font-size:9px;color:#f8e7b0;font-weight:normal">Agende</div><div class="t" style="transform:scaleX(0.9609);left:577.50px;top:281.00px;font-size:9px;color:#333;font-weight:normal">Resolução Indicada 03</div><div class="t" style="transform:scaleX(0.9320);left:788.50px;top:281.00px;font-size:9px;color:#333;font-weight:normal">Responsável 3</div><div class="r" style="left:502px;top:297px;width:67px;height:26px;background:#ff9c12;"></div><div class="t" style="transform:scaleX(1.0078);left:115.70px;top:306.00px;font-size:9px;color:#333;font-weight:normal">16/01/2023</div><div class="t" style="transform:scaleX(0.9549);left:175.00px;top:306.00px;font-size:9px;color:#333;font-weight:normal">Atividade&nbsp; 04</div><div class="t" style="left:375.80px;top:306.00px;font-size:8.5px;color:#333;font-weight:normal">Alta</div><div class="t" style="left:441.50px;top:306.00px;font-size:8.5px;color:#333;font-weight:normal">Baixa</div><div class="t" style="transform:scaleX(0.8947);left:508.50px;top:306.00px;font-size:9px;color:#ffe3b8;font-weight:normal">Delegue</div><div class="t" style="transform:scaleX(0.9609);left:577.50px;top:306.00px;font-size:9px;color:#333;font-weight:normal">Resolução Indicada 04</div><div class="t" style="transform:scaleX(0.9320);left:788.50px;top:306.00px;font-size:9px;color:#333;font-weight:normal">Responsável 4</div><div class="r" style="left:502px;top:322px;width:67px;height:26px;background:#7af5c6;"></div><div class="t" style="transform:scaleX(1.0078);left:115.70px;top:331.00px;font-size:9px;color:#333;font-weight:normal">21/01/2023</div><div class="t" style="transform:scaleX(0.9549);left:175.00px;top:331.00px;font-size:9px;color:#333;font-weight:normal">Atividade&nbsp; 05</div><div class="t" style="left:375.80px;top:331.00px;font-size:8.5px;color:#333;font-weight:normal">Alta</div><div class="t" style="left:441.50px;top:331.00px;font-size:8.5px;color:#333;font-weight:normal">Alta</div><div class="t" style="transform:scaleX(0.9233);left:508.50px;top:331.00px;font-size:9px;color:#1d4a33;font-weight:normal">Faça Agora</div><div class="t" style="transform:scaleX(0.9609);left:577.50px;top:331.00px;font-size:9px;color:#333;font-weight:normal">Resolução Indicada 05</div><div class="t" style="transform:scaleX(0.9320);left:788.50px;top:331.00px;font-size:9px;color:#333;font-weight:normal">Responsável 2</div><div class="r" style="left:502px;top:347px;width:67px;height:26px;background:#c00000;"></div><div class="t" style="transform:scaleX(1.0078);left:115.70px;top:356.00px;font-size:9px;color:#333;font-weight:normal">26/01/2023</div><div class="t" style="transform:scaleX(0.9549);left:175.00px;top:356.00px;font-size:9px;color:#333;font-weight:normal">Atividade&nbsp; 06</div><div class="t" style="left:375.80px;top:356.00px;font-size:8.5px;color:#333;font-weight:normal">Baixa</div><div class="t" style="left:441.50px;top:356.00px;font-size:8.5px;color:#333;font-weight:normal">Baixa</div><div class="t" style="transform:scaleX(0.9656);left:508.50px;top:356.00px;font-size:9px;color:#f7d9d9;font-weight:normal">Elimine</div><div class="t" style="transform:scaleX(0.9609);left:577.50px;top:356.00px;font-size:9px;color:#333;font-weight:normal">Resolução Indicada 06</div><div class="t" style="transform:scaleX(0.9320);left:788.50px;top:356.00px;font-size:9px;color:#333;font-weight:normal">Responsável 3</div><div class="r" style="left:502px;top:372px;width:67px;height:26px;background:#bf8f00;"></div><div class="t" style="transform:scaleX(1.0078);left:115.70px;top:381.00px;font-size:9px;color:#333;font-weight:normal">31/01/2023</div><div class="t" style="transform:scaleX(0.9549);left:175.00px;top:381.00px;font-size:9px;color:#333;font-weight:normal">Atividade&nbsp; 07</div><div class="t" style="left:375.80px;top:381.00px;font-size:8.5px;color:#333;font-weight:normal">Baixa</div><div class="t" style="left:441.50px;top:381.00px;font-size:8.5px;color:#333;font-weight:normal">Alta</div><div class="t" style="transform:scaleX(0.9023);left:508.50px;top:381.00px;font-size:9px;color:#f8e7b0;font-weight:normal">Agende</div><div class="t" style="transform:scaleX(0.9609);left:577.50px;top:381.00px;font-size:9px;color:#333;font-weight:normal">Resolução Indicada 07</div><div class="t" style="transform:scaleX(0.9320);left:788.50px;top:381.00px;font-size:9px;color:#333;font-weight:normal">Responsável 4</div><div class="r" style="left:502px;top:397px;width:67px;height:26px;background:#ff9c12;"></div><div class="t" style="transform:scaleX(1.0078);left:115.70px;top:407.00px;font-size:9px;color:#333;font-weight:normal">05/02/2023</div><div class="t" style="transform:scaleX(0.9549);left:175.00px;top:407.00px;font-size:9px;color:#333;font-weight:normal">Atividade&nbsp; 08</div><div class="t" style="left:375.80px;top:407.00px;font-size:8.5px;color:#333;font-weight:normal">Alta</div><div class="t" style="left:441.50px;top:407.00px;font-size:8.5px;color:#333;font-weight:normal">Baixa</div><div class="t" style="transform:scaleX(0.8947);left:508.50px;top:407.00px;font-size:9px;color:#ffe3b8;font-weight:normal">Delegue</div><div class="t" style="transform:scaleX(0.9609);left:577.50px;top:407.00px;font-size:9px;color:#333;font-weight:normal">Resolução Indicada 08</div><div class="t" style="transform:scaleX(0.9320);left:788.50px;top:407.00px;font-size:9px;color:#333;font-weight:normal">Responsável 4</div><div class="r" style="left:502px;top:422px;width:67px;height:25px;background:#bf8f00;"></div><div class="t" style="transform:scaleX(1.0078);left:115.70px;top:432.00px;font-size:9px;color:#333;font-weight:normal">10/02/2023</div><div class="t" style="transform:scaleX(0.9549);left:175.00px;top:432.00px;font-size:9px;color:#333;font-weight:normal">Atividade&nbsp; 09</div><div class="t" style="left:375.80px;top:432.00px;font-size:8.5px;color:#333;font-weight:normal">Baixa</div><div class="t" style="left:441.50px;top:432.00px;font-size:8.5px;color:#333;font-weight:normal">Alta</div><div class="t" style="transform:scaleX(0.9023);left:508.50px;top:432.00px;font-size:9px;color:#f8e7b0;font-weight:normal">Agende</div><div class="t" style="transform:scaleX(0.9609);left:577.50px;top:432.00px;font-size:9px;color:#333;font-weight:normal">Resolução Indicada 09</div><div class="t" style="transform:scaleX(0.9320);left:788.50px;top:432.00px;font-size:9px;color:#333;font-weight:normal">Responsável 3</div><div class="r" style="left:502px;top:448px;width:67px;height:25px;background:#f2f2f2;"></div><div class="r" style="left:502px;top:474px;width:67px;height:24px;background:#f2f2f2;"></div><div class="r" style="left:502px;top:499px;width:67px;height:13px;background:#f2f2f2;"></div><div class="r" style="left:882.5px;top:435.5px;width:11px;height:10.5px;background:#f6f6f6;border:0.6px solid #bdbdbd;box-sizing:border-box"></div><svg class="r" style="left:885px;top:439.5px" width="6" height="4" viewBox="0 0 6 4"><path d="M0 0h6l-3 3z" fill="#444"/></svg><div class="r" style="left:1012px;top:131px;width:12px;height:383px;background:#f5f5f5;"></div><svg class="r" style="left:1016px;top:123px" width="8" height="6" viewBox="0 0 8 6"><path d="M0.5 5.5h7l-3.5-4.5z" fill="#555"/></svg><div class="r" style="left:1017px;top:132px;width:6px;height:12px;background:#8a8a8a;border-radius:3px"></div><svg class="r" style="left:1016px;top:505px" width="8" height="6" viewBox="0 0 8 6"><path d="M0.5 0.5h7l-3.5 4.5z" fill="#555"/></svg><div class="r" style="left:18px;top:512px;width:994px;height:2px;background:#ececec;"></div><svg class="r" style="left:0px;top:0px" width="110" height="210" viewBox="0 0 110 210">
<rect x="19" y="132.4" width="23.8" height="20.2" fill="#6fd8f2"/>
<rect x="61.9" y="132.4" width="24.9" height="20.2" fill="#8dbb18"/>
<rect x="19" y="178.1" width="23.8" height="21.8" fill="#f88552"/>
<rect x="61.9" y="178.1" width="24.9" height="21.8" fill="#ffc20e"/>
<g fill="#145a75">
<rect x="26.1" y="140.5" width="8.6" height="3.5" rx="1.5"/>
<rect x="69.7" y="140.5" width="9.3" height="3.5" rx="1.7"/>
<rect x="26.1" y="187.2" width="8.6" height="3.7" rx="1.5"/>
<rect x="69.7" y="187.2" width="9.3" height="3.7" rx="1.7"/>
<rect x="50.4" y="135" width="3.8" height="62"/>
<rect x="22" y="163.4" width="59" height="4.3"/>
<path d="M47 135.4 C48.5 131.3 56.2 131.3 57.7 135.4 C56.2 139.4 48.5 139.4 47 135.4Z"/>
<path d="M47.2 196 C48.7 192 56.3 192 57.8 196 C56.3 200 48.7 200 47.2 196Z"/>
<path d="M22.1 160.2 C17.6 162 17.6 168.9 22.1 170.7 C26.4 168.9 26.4 162 22.1 160.2Z"/>
<path d="M79 160.2 C80.6 161 86.6 165.5 86.6 165.7 C86.6 166 80.6 170.5 79 171.3 C78 169 78 162.5 79 160.2Z"/>
</g>
</svg>
<div class="r" style="left:123.9px;top:140.5px;width:115.2px;height:20px;background:#7af5c6;border-radius:2.5px"></div><div class="t" style="transform:scaleX(0.8529);left:138.50px;top:147.00px;font-size:8.6px;color:#153a28;font-weight:bold">TAREFAS E SITUAÇÕES</div><div class="r" style="left:18px;top:249px;width:83px;height:33px;background:#7af5c6;"></div><div class="r" style="left:18px;top:220px;width:83px;height:2px;background:#767676;"></div><div class="t" style="transform:scaleX(0.8583);left:24.30px;top:223.00px;font-size:8.6px;color:#f2f2f2;font-weight:bold">CADASTRO</div><div class="t" style="transform:scaleX(0.8446);left:24.30px;top:257.00px;font-size:8.6px;color:#153a28;font-weight:bold">TAREFAS E</div><div class="t" style="transform:scaleX(0.8516);left:24.30px;top:268.00px;font-size:8.6px;color:#153a28;font-weight:bold">SITUAÇÕES</div><div class="t" style="transform:scaleX(0.8563);left:24.30px;top:301.00px;font-size:8.6px;color:#f2f2f2;font-weight:bold">RELATÓRIOS</div><div class="t" style="transform:scaleX(0.8897);left:24.30px;top:340.00px;font-size:8.6px;color:#f2f2f2;font-weight:bold">DASHBOARD</div><div class="t" style="transform:scaleX(0.8643);left:24.30px;top:377.00px;font-size:8.6px;color:#f2f2f2;font-weight:bold">INSTRUÇÕES</div>
</body></html>
